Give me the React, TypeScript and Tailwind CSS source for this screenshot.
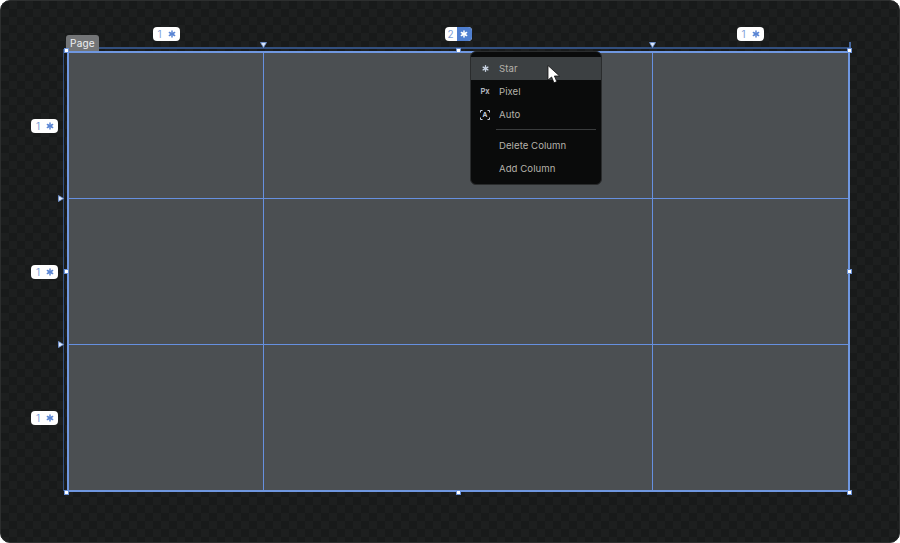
import { Asterisk } from "lucide-react";

const font = "font-['Inter','Liberation_Sans',sans-serif]";

function Chip({ value }: { value: string }) {
  return (
    <div className="flex h-[14px] w-[27px] items-center justify-between rounded-[4px] bg-white pl-[5px] pr-[2px] text-[10px] leading-none text-[#7f9fd8]">
      <span>{value}</span>
      <Asterisk size={12} strokeWidth={3} className="text-[#5b86d4]" />
    </div>
  );
}

function Handle({ className }: { className: string }) {
  return <div className={`absolute h-[5px] w-[5px] border border-[#6c93d8] bg-white ${className}`} />;
}

function TriDown({ className }: { className: string }) {
  return (
    <svg width="7" height="6" viewBox="0 0 7 6" className={`absolute ${className}`}>
      <path d="M0.5 0.5H6.5L3.5 5.5Z" fill="#dbe6f8" stroke="#6c93d8" strokeWidth="0.8" />
    </svg>
  );
}

function TriRight({ className }: { className: string }) {
  return (
    <svg width="6" height="7" viewBox="0 0 6 7" className={`absolute ${className}`}>
      <path d="M0.5 0.5V6.5L5.5 3.5Z" fill="#dbe6f8" stroke="#6c93d8" strokeWidth="0.8" />
    </svg>
  );
}

function MenuRow({ label, icon, active }: { label: string; icon?: React.ReactNode; active?: boolean }) {
  return (
    <div className={`flex h-[23px] items-center ${active ? "bg-[#3c4042]" : ""}`}>
      <div className="flex w-[28px] justify-center text-[#c9d3e2]">{icon}</div>
      <span className="pt-[1px] text-[9.6px] tracking-[0.05px] text-[#b5b2aa]">{label}</span>
    </div>
  );
}

function AutoIcon() {
  return (
    <svg width="10" height="10" viewBox="0 0 10 10" fill="none" stroke="#c9d3e2" strokeWidth="1">
      <path d="M0.5 2.5V0.5H2.5M7.5 0.5H9.5V2.5M9.5 7.5V9.5H7.5M2.5 9.5H0.5V7.5" />
      <text x="5" y="7.4" textAnchor="middle" fontSize="6.5" fontWeight="700" fill="#c9d3e2" stroke="none">A</text>
    </svg>
  );
}

export default function App() {
  return (
    <div className={`h-[543px] w-[900px] bg-white ${font}`}>
      <div className="grid h-full w-full grid-cols-[66px_783px] grid-rows-[50px_441px] overflow-hidden rounded-[10px] border border-[#2c2e2e] bg-[#191b1b] bg-[conic-gradient(#1d1f1f_25%,#181a1a_0_50%,#1d1f1f_0_75%,#181a1a_0)] bg-[length:16px_16px]">
        <div />

        {/* column ruler */}
        <div className="relative grid grid-cols-[194px_388px_194px] gap-x-[1px] pl-[2px] pt-[26px]">
          <div className="flex justify-center">
            <Chip value="1" />
          </div>
          <div className="flex justify-center">
            <div className="flex h-[14px] w-[27px] overflow-hidden rounded-[4px] bg-white text-[10px] leading-[14px] text-[#7f9fd8]">
              <span className="w-[12px] pl-[3px]">2</span>
              <div className="flex flex-1 items-center justify-center bg-[#4f7fd0]">
                <Asterisk size={12} strokeWidth={3} className="text-white" />
              </div>
            </div>
          </div>
          <div className="flex justify-center">
            <Chip value="1" />
          </div>
          <div className="absolute bottom-[2px] left-0 h-[2px] w-[782px] bg-[#33507f]" />
          <div className="absolute -right-[1px] bottom-[1px] h-[8px] w-[2px] bg-[#46689f]" />
          <div className="absolute bottom-0 left-[-1px] flex h-[16px] w-[33px] justify-center rounded-t-[3px] bg-[#737577] pt-[2px] text-[10px] leading-[12px] tracking-[0.2px] text-[#eef0f2]">
            Page
          </div>
        </div>

        {/* row ruler */}
        <div className="relative grid grid-rows-[145px_145px_145px] gap-y-[1px] pb-[2px] pl-[30px] pt-[2px]">
          <div className="flex items-center">
            <Chip value="1" />
          </div>
          <div className="flex items-center">
            <Chip value="1" />
          </div>
          <div className="flex items-center">
            <Chip value="1" />
          </div>
          <div className="absolute right-[3px] top-[-2px] h-[442px] w-[1px] bg-[#33507f]" />
        </div>

        {/* page with its grid */}
        <div className="relative">
          <div className="h-full w-full border-2 border-[#6f97e0] bg-[#6690e0]">
            <div className="grid h-full w-full grid-cols-[194px_388px_1fr] grid-rows-[145px_145px_145px] gap-[1px]">
              {Array.from({ length: 9 }).map((_, i) => (
                <div key={i} className="bg-[#4b4f52]" />
              ))}
            </div>
          </div>

          <TriDown className="left-[193px] top-[-9px]" />
          <TriDown className="left-[582px] top-[-9px]" />
          <TriRight className="left-[-9px] top-[144px]" />
          <TriRight className="left-[-9px] top-[290px]" />

          <Handle className="left-[-3px] top-[-3px]" />
          <Handle className="left-[389px] top-[-3px]" />
          <Handle className="left-[780px] top-[-3px]" />
          <Handle className="left-[-3px] top-[218px]" />
          <Handle className="left-[780px] top-[218px]" />
          <Handle className="left-[-3px] top-[439px]" />
          <Handle className="left-[389px] top-[439px]" />
          <Handle className="left-[780px] top-[439px]" />

          {/* context menu */}
          <div className="absolute left-[403px] top-[0px] w-[132px] rounded-[6px] border border-[#2a2c2d] bg-[#0a0b0b] pb-[4px] pt-[5px]">
            <MenuRow label="Star" active icon={<Asterisk size={11} strokeWidth={3} />} />
            <MenuRow label="Pixel" icon={<span className="text-[7.5px] font-bold leading-none text-[#aeb4bd]">Px</span>} />
            <MenuRow label="Auto" icon={<AutoIcon />} />
            <div className="mb-[4px] ml-[25px] mr-[5px] mt-[3px] h-[1px] bg-[#3a3c3d]" />
            <MenuRow label="Delete Column" />
            <MenuRow label="Add Column" />
          </div>

          <svg width="14" height="20" viewBox="0 0 14 20" className="absolute left-[480px] top-[14px]">
            <path d="M1 0.5V15L4.6 12L7 17.8L9.8 16.6L7.4 11H12.5Z" fill="#fff" stroke="#111" strokeWidth="0.8" />
          </svg>
        </div>
      </div>
    </div>
  );
}
